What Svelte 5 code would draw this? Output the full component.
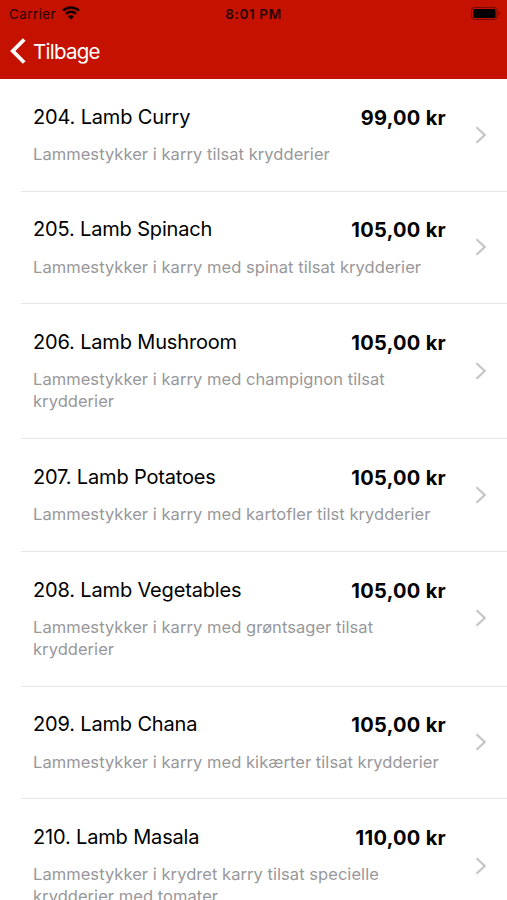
<script lang="ts">
  interface Dish {
    number: number;
    name: string;
    description: string;
    price: string;
  }

  const dishes: Dish[] = [
    { number: 204, name: "Lamb Curry", description: "Lammestykker i karry tilsat krydderier", price: "99,00" },
    { number: 205, name: "Lamb Spinach", description: "Lammestykker i karry med spinat tilsat krydderier", price: "105,00" },
    { number: 206, name: "Lamb Mushroom", description: "Lammestykker i karry med champignon tilsat krydderier", price: "105,00" },
    { number: 207, name: "Lamb Potatoes", description: "Lammestykker i karry med kartofler tilst krydderier", price: "105,00" },
    { number: 208, name: "Lamb Vegetables", description: "Lammestykker i karry med grøntsager tilsat krydderier", price: "105,00" },
    { number: 209, name: "Lamb Chana", description: "Lammestykker i karry med kikærter tilsat krydderier", price: "105,00" },
    { number: 210, name: "Lamb Masala", description: "Lammestykker i krydret karry tilsat specielle krydderier med tomater", price: "110,00" },
  ];
</script>

<div class="screen">
  <header class="header">
    <div class="status-bar">
      <div class="carrier">
        <span>Carrier</span>
        <svg class="wifi" viewBox="0 0 18 14">
          <path d="M1 4.7a11.5 11.5 0 0 1 16 0" />
          <path d="M3.9 7.9a7.3 7.3 0 0 1 10.2 0" />
          <path class="dot" d="M9 13.6 5.9 10.5a4.4 4.4 0 0 1 6.2 0z" />
        </svg>
      </div>
      <span class="time">8:01 PM</span>
      <svg class="battery" viewBox="0 0 30 13">
        <rect class="case" x="0.5" y="0.5" width="25.5" height="12" rx="3" />
        <rect x="2" y="2" width="22.5" height="9" rx="1.5" />
        <path class="tip" d="M27.5 4.5v4q1.5-.5 1.5-2t-1.5-2z" />
      </svg>
    </div>
    <button class="back">
      <svg viewBox="0 0 16 26">
        <path d="M14.2 1.5 2.8 13l11.4 11.5" />
      </svg>
      <span>Tilbage</span>
    </button>
  </header>

  <main class="menu">
    {#each dishes as dish}
      <article class="dish">
        <div class="content">
          <div class="title-row">
            <h2>{dish.number}. {dish.name}</h2>
            <span class="price">{dish.price} kr</span>
          </div>
          <p>{dish.description}</p>
        </div>
        <svg class="chevron" viewBox="0 0 12 18">
          <path d="m1.5 1.3 8.2 7.7-8.2 7.7" />
        </svg>
      </article>
    {/each}
  </main>
</div>

<style>
  :global(body) {
    margin: 0;
  }

  .screen {
    height: 900px;
    overflow: hidden;
    background: #fff;
    font-family: Inter, "Liberation Sans", sans-serif;
    color: #000;
  }

  .header {
    box-sizing: border-box;
    height: 79px;
    background: #c51200;
  }

  .status-bar {
    display: grid;
    grid-template-columns: 1fr auto 1fr;
    align-items: center;
    height: 27px;
    padding: 0 6px 0 9px;
    font-size: 13.5px;
    color: #260300;
  }

  .carrier {
    display: flex;
    align-items: center;
    gap: 6px;
    letter-spacing: 0.4px;
  }

  .wifi {
    width: 18px;
    height: 14px;
    margin-top: -2px;
    fill: none;
    stroke: #120000;
    stroke-width: 2.4;
  }

  .wifi .dot {
    fill: #120000;
    stroke: none;
  }

  .time {
    margin-right: 3px;
    font-weight: 600;
    letter-spacing: 0.65px;
  }

  .battery {
    justify-self: end;
    width: 30px;
    height: 13px;
    margin-top: -1px;
    fill: #000;
  }

  .battery .case {
    fill: none;
    stroke: #000;
    stroke-opacity: 0.4;
  }

  .battery .tip {
    fill-opacity: 0.4;
  }

  .back {
    display: flex;
    align-items: center;
    gap: 7px;
    height: 48px;
    padding: 0 10px;
    border: 0;
    background: none;
    color: #fff;
    font: inherit;
    font-size: 20.5px;
    letter-spacing: -0.75px;
  }

  .back svg {
    width: 16px;
    height: 26px;
    fill: none;
    stroke: currentColor;
    stroke-width: 3.8;
  }

  .back span {
    padding-top: 1px;
  }

  .dish {
    display: flex;
    align-items: center;
    margin-left: 21px;
    padding: 23.6px 20px 25.75px 12px;
    border-bottom: 1px solid #e8e8e9;
  }

  .content {
    width: 413px;
  }

  .title-row {
    display: flex;
    justify-content: space-between;
    align-items: center;
    height: 28px;
    line-height: 28px;
  }

  h2 {
    margin: 0;
    font-size: 20px;
    font-weight: 400;
    letter-spacing: -0.16px;
  }

  .price {
    padding-top: 2px;
    font-size: 20px;
    font-weight: 700;
    letter-spacing: 0.3px;
  }

  p {
    margin: 12.4px 0 0;
    color: #98989a;
    font-size: 16.5px;
    line-height: 22px;
    letter-spacing: 0.05px;
  }

  .chevron {
    width: 12px;
    height: 18px;
    margin: 1.5px 0 0 auto;
    fill: none;
    stroke: #c5c5c8;
    stroke-width: 2.2;
  }
</style>
